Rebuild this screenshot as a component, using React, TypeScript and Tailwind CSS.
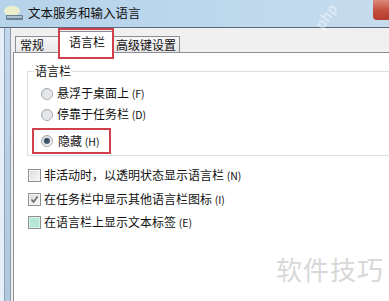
import React from "react";

const font = { fontFamily: '"Noto Sans CJK SC", "Noto Sans", sans-serif' };

function Radio({ checked }: { checked?: boolean }) {
  return (
    <span className="flex h-[12px] w-[12px] shrink-0 items-center justify-center rounded-full border border-[#a3a7ae] bg-gradient-to-br from-[#d6d8dc] to-[#f6f6f7]">
      {checked ? (
        <span className="h-[6px] w-[6px] rounded-full bg-gradient-to-br from-[#1f3346] to-[#5c7388]" />
      ) : (
        <span className="h-[8px] w-[8px] rounded-full bg-[#e4e6e9]" />
      )}
    </span>
  );
}

function Checkbox({ checked, focus }: { checked?: boolean; focus?: boolean }) {
  return (
    <span
      className={
        "flex h-[13px] w-[13px] shrink-0 items-center justify-center border border-[#8e8f8f] " +
        (focus ? "bg-[#d7f3ea]" : "bg-[#f4f4f4]")
      }
    >
      <span
        className={
          "flex h-[9px] w-[9px] items-center justify-center " +
          (focus ? "bg-[#b6e6d6]" : "bg-gradient-to-br from-[#dcdcdc] to-[#f8f8f8]")
        }
      >
        {checked && (
          <svg width="9" height="9" viewBox="0 0 9 9">
            <path d="M1.5 4.5 L3.6 7 L7.6 1.5" fill="none" stroke="#6a6a6a" strokeWidth="1.6" />
          </svg>
        )}
      </span>
    </span>
  );
}

export default function App() {
  return (
    <div className="relative h-[301px] w-[389px] overflow-hidden bg-[#f0f0f0] text-[12px] text-[#111]" style={font}>
      {/* Title bar */}
      <div className="flex h-[28px] items-start border-b border-[#5b6878] bg-gradient-to-r from-[#b7d3ea] via-[#bcd7ec] to-[#c6dcee]">
        <div className="ml-[4px] mt-[6px] h-[16px] w-[20px]">
          <svg width="20" height="16" viewBox="0 0 20 16">
            <ellipse cx="8" cy="5" rx="8" ry="5" fill="#f3f1c9" opacity="0.9" />
            <rect x="2" y="9" width="17" height="5" rx="1" fill="#6d8196" />
            <rect x="3" y="10" width="15" height="2" fill="#aebfcf" />
          </svg>
        </div>
        <div className="ml-[4px] mt-[4px] text-[12.5px] leading-[17px] text-[#111]">文本服务和输入语言</div>
        <div className="ml-auto mr-[-6px] h-[20px] w-[22px] rounded-bl-[4px] bg-gradient-to-b from-[#d98a7c] via-[#c4503f] to-[#b43c2c]" />
      </div>

      {/* Body */}
      <div className="flex h-[273px]">
        {/* Left frame */}
        <div className="flex w-[11px] shrink-0">
          <div className="w-[4px] bg-[#e6eff7]" />
          <div className="w-[1px] bg-[#8ea3b8]" />
          <div className="w-[5px] bg-gradient-to-b from-[#c2d8ec] to-[#aec8de]" />
          <div className="w-[1px] bg-[#8f99a3]" />
        </div>

        {/* Client */}
        <div className="flex flex-1 flex-col pl-[2px]">
          {/* Tabs */}
          <div className="flex h-[24px] items-end">
            <div className="ml-[2px] h-[16px] w-[44px] border border-b-0 border-[#8c8e94] bg-gradient-to-b from-[#f7f7f7] to-[#e8e8e8] pl-[4px] leading-[15px]">
              常规
            </div>
            <div className="relative z-10 mb-[-1px] h-[22px] w-[55px] border border-b-0 border-[#8c8e94] bg-white pl-[9px] pt-[1px] leading-[17px]">
              语言栏
            </div>
            <div className="h-[16px] w-[66px] border border-b-0 border-l-0 border-[#8c8e94] bg-gradient-to-b from-[#f7f7f7] to-[#e8e8e8] pl-[2px] leading-[15px]">
              高级键设置
            </div>
          </div>

          {/* Panel */}
          <div className="flex-1 border-l border-t border-[#8c8e94] bg-white">
            <fieldset className="ml-[13px] mr-[-20px] mt-[10px] border border-[#d5dfe5] pb-[1px]">
              <legend className="ml-[6px] px-[1px] leading-[16px]">语言栏</legend>
              <div className="flex flex-col pt-[4px]">
                <div className="flex h-[21px] items-center pl-[13px]">
                  <Radio />
                  <span className="ml-[4px] leading-[16px]">
                    悬浮于桌面上 <span className="text-[10.5px]">(F)</span>
                  </span>
                </div>
                <div className="flex h-[21px] items-center pl-[13px]">
                  <Radio />
                  <span className="ml-[4px] leading-[16px]">
                    停靠于任务栏 <span className="text-[10.5px]">(D)</span>
                  </span>
                </div>
                <div className="ml-[4px] mt-[3px] flex h-[26px] w-[79px] items-center border-2 border-[#d0404a] pl-[7px]">
                  <Radio checked />
                  <span className="ml-[5px] leading-[16px]">
                    隐藏 <span className="text-[10.5px]">(H)</span>
                  </span>
                </div>
              </div>
            </fieldset>

            <div className="mt-[8px] flex flex-col pl-[14px]">
              <div className="flex h-[23px] items-center">
                <Checkbox />
                <span className="ml-[3px] leading-[16px]">
                  非活动时，以透明状态显示语言栏 <span className="text-[10.5px]">(N)</span>
                </span>
              </div>
              <div className="flex h-[24px] items-center">
                <Checkbox checked />
                <span className="ml-[3px] leading-[16px]">
                  在任务栏中显示其他语言栏图标 <span className="text-[10.5px]">(I)</span>
                </span>
              </div>
              <div className="flex h-[23px] items-center">
                <Checkbox focus />
                <span className="ml-[3px] leading-[16px]">
                  在语言栏上显示文本标签 <span className="text-[10.5px]">(E)</span>
                </span>
              </div>
            </div>
          </div>
        </div>
      </div>

      {/* Red highlight around selected tab */}
      <div className="absolute left-[58px] top-[28px] z-20 h-[31px] w-[56px] border-2 border-[#d0404a]" />

      {/* Watermarks */}
      <div className="absolute left-[312px] top-[8px] rotate-[-55deg] text-[14px] font-bold leading-[16px] text-white opacity-40">php</div>
      <div className="absolute left-[276px] top-[254px] text-[26px] leading-[30px] tracking-[1px] text-[#d8d8d8]">软件技巧</div>
    </div>
  );
}
